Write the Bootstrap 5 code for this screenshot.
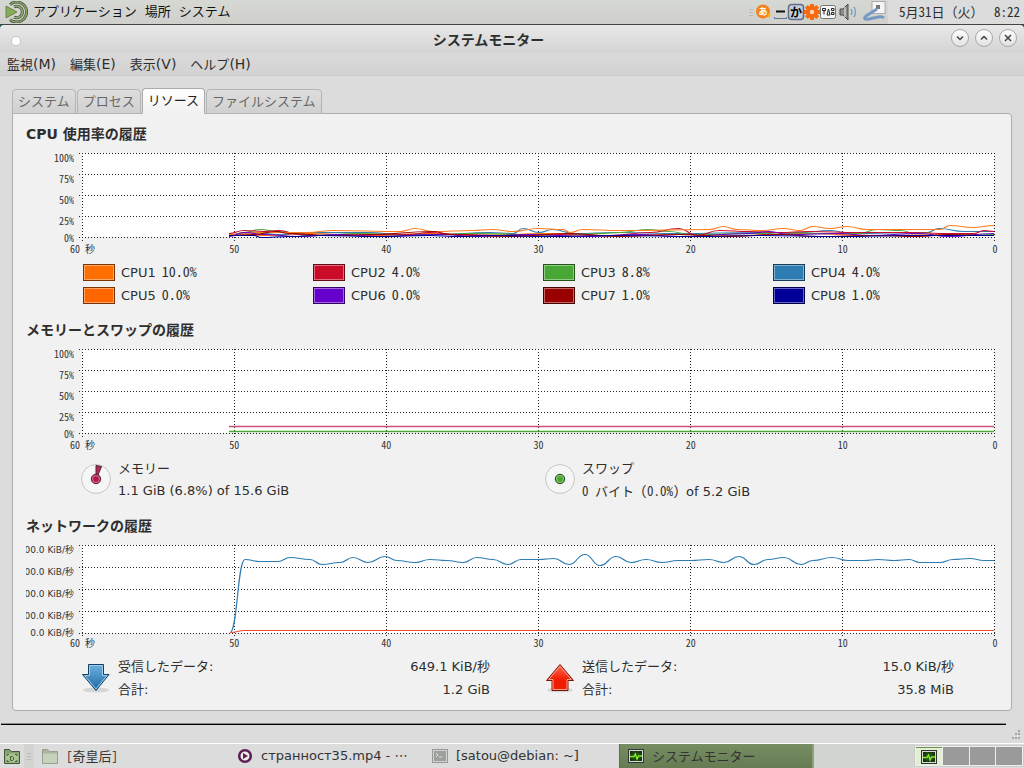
<!DOCTYPE html>
<html lang="ja">
<head>
<meta charset="utf-8">
<meta name="viewport" content="width=device-width, initial-scale=1">
<title>システムモニター</title>
<link rel="stylesheet" href="https://cdn.jsdelivr.net/npm/bootstrap@5.3.0/dist/css/bootstrap.min.css">
<style>
body{font:13px/20px "DejaVu Sans","Noto Sans CJK JP",sans-serif;color:#2e2e2e;background:#dcdcdc}
button{font:inherit;color:inherit;background:none;border:0;padding:0}
.cjk{font-family:"Noto Sans CJK JP",sans-serif;font-feature-settings:"hwid"}
.fullw{font-feature-settings:normal}
.fs14{font-size:14px}
.toppanel{height:25px;background:linear-gradient(#d6d8d4,#cfd0cc);border-bottom:1px solid #444;padding-left:5px;color:#111}
.toppanel nav{gap:8px;margin-left:5px}
.toppanel nav button{line-height:18px;padding-bottom:2px}
.clock{background:#dcdcdc;height:24px;padding:0 4px 0 11px;line-height:23px;color:#2e2e2e}
.titlebar{height:28px;background:linear-gradient(#e8e8e8,#d4d4d4);padding:0 7px 0 12px;border-radius:4px 4px 0 0}
.titlewrap{background:#12565f}
.titlebar h1{font-size:14px;line-height:28px;font-weight:700;padding-left:6px;margin:0}
.dot{width:8px;height:8px;border-radius:50%;background:#fff;box-shadow:0 0 0 1px #c8c8c8;margin-top:4px}
.wbtns{gap:6px;margin-top:-2px}
.wbtn{width:18px;height:18px;border-radius:50%;border:1px solid #a6a6a6;background:linear-gradient(#fff,#e2e2e2);display:flex;align-items:center;justify-content:center}
.menus{height:23px;background:linear-gradient(#dadada,#d2d2d2);border-bottom:1px solid #cacaca;padding-left:7px;gap:14px}
.menus button{line-height:22px}
.body-area{padding:12px 12px 0}
.nav-tabs{border:0;gap:1px;align-items:flex-end;position:relative;z-index:1;margin-bottom:-1px}
.nav-tabs .nav-link{border:1px solid #b4b4b4;border-radius:4px 4px 0 0;padding:0 5px 2px;height:25px;line-height:20px;color:#666;background:linear-gradient(#dedede,#d0d0d0);margin:0}
.nav-tabs .nav-link.active{height:26px;color:#222;background:linear-gradient(#fff,#f1f1f1);border-color:#aaa;border-bottom-color:#f1f1f1}
.pane{background:#f1f1f1;border:1px solid #adadad;border-radius:0 4px 4px 4px;height:598px;padding:10px 4px 0 13px}
.sect{height:196px}
.sect h2{font-size:14px;line-height:20px;font-weight:700;margin:0}
.chart-row{padding:9px 12px 0 0;height:98px}
.ylab{width:48px;margin-right:5px;margin-top:-6px;font-size:10px;color:#333}
.ylab span{display:flex;justify-content:flex-end;white-space:nowrap;overflow:hidden;height:21px;line-height:21px}
.ylab span:last-child{height:13px;line-height:13px}
.ylab.net{font-size:9px}
.ylab.net span{height:22px;line-height:22px}
.ylab.net span:last-child{height:13px;line-height:13px}
.plot{min-width:0}
.plot svg{display:block;width:100%;height:94px}
.xlab{padding-left:44px;font-size:10px;line-height:14px;height:14px;color:#333}
.xlab span{width:24px;text-align:center;white-space:nowrap}
.xlab.net{margin-top:2px;margin-bottom:1px}
.legend{display:grid;grid-template-columns:repeat(4,1fr);padding:6px 4px 0 57px;row-gap:3px}
.legend>div{height:20px}
.legend .lbl{margin-left:6px;line-height:22px;height:20px}
.legend .cjk{line-height:18px}
.swatch{width:32px;height:17px;border:1px solid #333;box-shadow:inset 0 0 0 1px rgba(255,255,255,.4)}
.pair{display:grid;grid-template-columns:1fr 1fr;column-gap:55px;padding:4px 53px 0 55px}
.pair .ico{width:30px;height:30px;margin-right:7px;margin-top:8px;flex:none}
.pair .ln{line-height:23px}
.statusrow{height:33px;border-bottom:1px solid #fff;padding:12px 18px 0 1px}
.statusrow hr{margin:0;border-top:1px solid #8c8c8c;border-bottom:1px solid #000;height:2px;opacity:1}
.grip{position:absolute;right:3px;bottom:3px}
.taskbar{height:24px;background:#dcdcdc}
.handle{width:10px;height:24px;background:#d3d4d1}
.task{width:195px;height:24px;text-align:left;display:flex;align-items:center;padding-left:8px;gap:8px;white-space:nowrap;color:#333}
.task.on{background:linear-gradient(#778d62,#667b52);border-right:2px solid #8ba477;border-left:1px solid #5d714a;color:#333}
.spacer{background:#d2d4d0;height:24px}
.ws{width:110px;height:22px;background:#eee;padding:1px;gap:1px;border:1px solid #ccc}
.ws button{flex:1;background:#9a9a9a;display:flex;align-items:center;justify-content:center}
.ws button.on{background:#e2f0d2;border-top:1px solid #6d9150}
</style>
</head>
<body>
<svg width="0" height="0" class="position-absolute">
<defs>
<symbol id="mon" viewBox="0 0 16 14"><rect x=".5" y=".5" width="15" height="13" fill="#d8dad6" stroke="#333"/><rect x="2" y="2" width="12" height="10" fill="#17330c"/><path d="M3 5h10M3 9h10M6 2v10M10 2v10" stroke="#2f5f17"/><path d="M2 7.500h4l1.500-2.500 1.500 5 1.500-3h3.500" fill="none" stroke="#82ee2c" stroke-width="1.400"/></symbol>
<linearGradient id="gb" x2="0" y2="1"><stop stop-color="#6fb0dc"/><stop offset="1" stop-color="#1c6aa6"/></linearGradient>
<linearGradient id="gr" x2="0" y2="1"><stop stop-color="#ff6a55"/><stop offset=".6" stop-color="#f01c00"/></linearGradient>
</defs>
</svg>
<div class="d-flex flex-column min-vh-100">
<header class="toppanel d-flex align-items-center">
<svg width="23" height="22" viewBox="0 0 23 22"><g fill="none"><path d="M5 3.500A10 10 0 1 1 5 18.500" stroke="#4b5346" stroke-width="3"/><path d="M5 3.500A10 10 0 1 1 5 18.500" stroke="#86a860" stroke-width="1.500"/><path d="M9 5.800A5.800 5.800 0 1 1 9 16.200" stroke="#4b5346" stroke-width="3"/><path d="M9 5.800A5.800 5.800 0 1 1 9 16.200" stroke="#93b56c" stroke-width="1.300"/></g><path d="M1 5l11 6L1 17z" fill="#86ad55" stroke="#5a7440" stroke-width=".8"/></svg>
<nav class="d-flex cjk"><button>アプリケーション</button><button>場所</button><button>システム</button></nav>
<svg class="ms-auto" width="140" height="24" viewBox="0 0 140 24">
<g stroke="#b9bbb7"><path d="M1 9.500h4M1 12.500h4M1 15.500h4"/></g>
<circle cx="15" cy="11.500" r="7" fill="#f5821c"/><path d="M19 15a3 3 0 0 1 4 0l-2 3z" fill="#fbb31c"/><text x="15" y="15" font-size="9" font-weight="700" text-anchor="middle" fill="#fff">あ</text>
<path d="M28 11.500h9" stroke="#111" stroke-width="2"/><path d="M26.500 17v1.500h12V17" fill="none" stroke="#5b7394"/>
<rect x="40.500" y="4.500" width="15" height="15" rx="3" fill="#c4cddb" stroke="#5d6e87" stroke-width="1.500"/><text x="48" y="16.500" font-size="12" font-weight="700" text-anchor="middle" fill="#000">か</text>
<g transform="translate(64 12)" fill="#f86a0c"><circle r="6"/><path d="M-2-8h4v16h-4zM-8-2h16v4h-16z"/><path d="M-2-8h4v16h-4zM-8-2h16v4h-16z" transform="rotate(45)"/></g><circle cx="64" cy="12" r="2.200" fill="#f5d9c4"/>
<rect x="72.500" y="5.500" width="15" height="13" rx="2" fill="#f5f5f5" stroke="#777"/><path d="M74.500 8.500h3v2h-3zM76 10.500v4M79 15l1.500-6 1.500 6zM83.500 8.500h2.500v2h-2.500zM83.500 12.500h2.500v2h-2.500z" fill="none" stroke="#222"/>
<path d="M92 9h3l5-5v16l-5-5h-3z" fill="#8b8e88" stroke="#4a4d48"/><path d="M97 7v10" stroke="#eee"/><path d="M103 9q2 3 0 6M106 7q3 5 0 10" fill="none" stroke="#6f9cc8" stroke-width="1.300"/>
<rect x="124" y="1.500" width="13" height="12" fill="#f6f6f6" stroke="#aaa"/><rect x="128" y="5" width="4" height="4" fill="#777"/><path d="M129 9l-11 7q-4 4 3 3l9-2q4-1 6 1" fill="none" stroke="#7899c4" stroke-width="3"/>
</svg>
<span class="clock cjk">5月31日<span class="fullw">（火）</span><span class="ms-1"> 8:22</span></span>
</header>

<div class="titlewrap"><div class="titlebar d-flex align-items-center">
<span class="dot"></span>
<h1 class="flex-fill text-center cjk">システムモニター</h1>
<div class="d-flex wbtns">
<button class="wbtn" aria-label="最小化"><svg width="8" height="8" viewBox="0 0 8 8"><path d="M1 2.500l3 3 3-3" fill="none" stroke="#444" stroke-width="1.500"/></svg></button>
<button class="wbtn" aria-label="最大化"><svg width="8" height="8" viewBox="0 0 8 8"><path d="M1 5.500l3-3 3 3" fill="none" stroke="#444" stroke-width="1.500"/></svg></button>
<button class="wbtn" aria-label="閉じる"><svg width="8" height="8" viewBox="0 0 8 8"><path d="M1 1l6 6M7 1L1 7" stroke="#444" stroke-width="1.500"/></svg></button>
</div></div></div>
<nav class="menus d-flex"><button>監視<span class="fs14">(M)</span></button><button>編集<span class="fs14">(E)</span></button><button>表示<span class="fs14">(V)</span></button><button>ヘルプ<span class="fs14">(H)</span></button></nav>

<main class="body-area">
<ul class="nav nav-tabs" role="tablist">
<li><button class="nav-link cjk" role="tab">システム</button></li><li><button class="nav-link cjk" role="tab">プロセス</button></li><li><button class="nav-link active cjk" role="tab" aria-selected="true">リソース</button></li><li><button class="nav-link cjk" role="tab">ファイルシステム</button></li>
</ul>
<div class="pane">
<section class="sect">
<h2>CPU 使用率の履歴</h2>
<div class="chart-row d-flex"><div class="ylab cjk"><span>100%</span><span>75%</span><span>50%</span><span>25%</span><span>0%</span></div><div class="plot flex-fill" data-chart="cpu" data-step="21"></div></div>
<div class="xlab cjk d-flex justify-content-between"><span>60 秒</span><span>50</span><span>40</span><span>30</span><span>20</span><span>10</span><span>0</span></div>
<div class="legend" id="legend"></div>
</section>
<section class="sect">
<h2>メモリーとスワップの履歴</h2>
<div class="chart-row d-flex"><div class="ylab cjk"><span>100%</span><span>75%</span><span>50%</span><span>25%</span><span>0%</span></div><div class="plot flex-fill" data-chart="mem" data-step="21"></div></div>
<div class="xlab cjk d-flex justify-content-between"><span>60 秒</span><span>50</span><span>40</span><span>30</span><span>20</span><span>10</span><span>0</span></div>
<div class="pair">
<div class="d-flex"><svg class="ico" viewBox="0 0 30 30"><circle cx="15" cy="15" r="14.500" fill="#f6f6f6" stroke="#c6c6c6"/><path d="M15 15V1.500l5.500 1L17 11z" fill="#b8285a" stroke="#4a2030"/><circle cx="15" cy="15" r="4.700" fill="#b5174f" stroke="#4a2030"/><circle cx="15" cy="15" r="3.500" fill="none" stroke="#d87c9d"/></svg><div class="ln"><div class="cjk">メモリー</div><div>1.1 GiB (6.8%) of 15.6 GiB</div></div></div>
<div class="d-flex"><svg class="ico" viewBox="0 0 30 30"><circle cx="15" cy="15" r="14.500" fill="#f6f6f6" stroke="#c6c6c6"/><circle cx="15" cy="15" r="4.700" fill="#49a835" stroke="#24421e"/><circle cx="15" cy="15" r="3.500" fill="none" stroke="#8fce80"/></svg><div class="ln"><div class="cjk">スワップ</div><div><span class="cjk">0 バイト (0.0%) </span>of 5.2 GiB</div></div></div>
</div>
</section>
<section class="sect">
<h2>ネットワークの履歴</h2>
<div class="chart-row d-flex"><div class="ylab net"><span>800.0 KiB/秒</span><span>600.0 KiB/秒</span><span>400.0 KiB/秒</span><span>200.0 KiB/秒</span><span>0.0 KiB/秒</span></div><div class="plot flex-fill" data-chart="net" data-step="22"></div></div>
<div class="xlab net cjk d-flex justify-content-between"><span>60 秒</span><span>50</span><span>40</span><span>30</span><span>20</span><span>10</span><span>0</span></div>
<div class="pair">
<div class="d-flex"><svg class="ico" viewBox="0 0 30 30"><ellipse cx="15" cy="27" rx="13" ry="2.500" fill="#d6d6d6"/><path d="M7.500 1.500h15v10h5.500L15 27.500 1.500 11.500h6z" fill="url(#gb)" stroke="#123f63"/><path d="M8.500 2.500h13v10h4.500L15 26 3.500 12.500h5z" fill="none" stroke="#9fcdec"/></svg><div class="ln flex-fill"><div class="d-flex justify-content-between"><span>受信したデータ:</span><span>649.1 KiB/秒</span></div><div class="d-flex justify-content-between"><span>合計:</span><span>1.2 GiB</span></div></div></div>
<div class="d-flex"><svg class="ico" viewBox="0 0 30 30"><ellipse cx="15" cy="27" rx="13" ry="2.500" fill="#d6d6d6"/><path d="M15 1.500L28.500 17.500h-5.500v10H7v-10H1.500z" fill="url(#gr)" stroke="#7c1205"/><path d="M15 3.200L26.300 16.500H22v10H8v-10H3.700z" fill="none" stroke="#ffa294"/></svg><div class="ln flex-fill"><div class="d-flex justify-content-between"><span>送信したデータ:</span><span>15.0 KiB/秒</span></div><div class="d-flex justify-content-between"><span>合計:</span><span>35.8 MiB</span></div></div></div>
</div>
</section>
</div>
</main>
<div class="statusrow position-relative"><hr><svg class="grip" width="10" height="10" fill="#a3a69c"><path d="M7 0h2v2h-2zM4 3h2v2h-2zM7 3h2v2h-2zM1 7h2v2h-2zM4 7h2v2h-2zM7 7h2v2h-2z"/></svg></div>

<footer class="taskbar d-flex align-items-center mt-auto">
<button aria-label="デスクトップ" class="d-flex ms-1 me-1"><svg width="16" height="15" viewBox="0 0 16 15"><path d="M.5 14.500V.5h5l2 2h8v12z" fill="#84a06c" stroke="#42583a"/><rect x="1.500" y="4.500" width="13" height="9" fill="#a9c492"/><path d="M3 7V5.500h2M13 7V5.500h-2M3 11v1.500h2M13 11v1.500h-2M6.500 7.500h2l1 1v2l-1 1h-2z" fill="none" stroke="#42583a"/></svg></button>
<span class="handle"><svg width="10" height="24"><path d="M3 9.500h4M3 12.500h4M3 15.500h4" stroke="#bbb"/></svg></span>
<button class="task"><svg width="16" height="15" viewBox="0 0 16 15"><path d="M.5 14.500V.5h5l2 2h8v12z" fill="#a9b5a0" stroke="#96a08e"/><rect x="1" y="4.500" width="14" height="9.500" fill="#c6d3ba"/></svg><span class="cjk">[奇皇后]</span></button>
<button class="task"><svg width="16" height="16" viewBox="0 0 16 16"><circle cx="8" cy="8" r="5.800" fill="#eee" stroke="#5c2054" stroke-width="2.600"/><path d="M6 5l5 3-5 3z" fill="#5c2054"/></svg><span>странност35.mp4 - ⋯</span></button>
<button class="task"><svg width="16" height="14" viewBox="0 0 16 14"><rect x=".5" y=".5" width="15" height="13" fill="#d2d2d2" stroke="#999"/><rect x="2" y="2" width="12" height="10" fill="#9c9f9c"/><path d="M4 4l2 2-2 2M7 8h3" fill="none" stroke="#e3e3e3"/></svg><span>[satou@debian: ~]</span></button>
<button class="task on"><svg width="16" height="14"><use href="#mon"/></svg><span class="cjk">システムモニター</span></button>
<div class="spacer flex-fill"></div>
<div class="ws d-flex"><button class="on" aria-label="1"><svg width="16" height="14"><use href="#mon"/></svg></button><button aria-label="2"></button><button aria-label="3"></button><button aria-label="4"></button></div>
</footer>
</div>
<script>
// CPU legend entries: value, fill, border
const cpus=[['10.0%','#ff6e00','#7d3500'],['4.0%','#cb0c29','#640a18'],['8.8%','#49a835','#24541a'],['4.0%','#2d7db3','#163e59'],['0.0%','#ff6600','#7d3200'],['0.0%','#6600cc','#320066'],['1.0%','#990000','#4a0000'],['1.0%','#000099','#00004a']];
document.getElementById('legend').innerHTML=cpus.map((c,i)=>`<div class="d-flex align-items-center"><span class="swatch" style="background:${c[1]};border-color:${c[2]}"></span><span class="lbl">CPU${i+1}</span><span class="lbl cjk fs14">${c[0]}</span></div>`).join('');
// Series: colour followed by x,y pairs of the sample points
const data={
cpu:[
['#ff6600',150,81,190,82,230,80,290,82,350,80,400,82,470,80,530,82,600,81,660,82,720,80,800,82,870,81,915,82],
['#2d7db3',150,81,175,79,200,81,230,79,290,79,320,81,360,81,410,79,434,80,444,75,460,79,474,76,495,80,540,79,600,80,680,79,700,81,720,79,752,77,770,80,848,79,860,75,885,78,915,78],
['#49a835',150,82,165,79,181,76,200,78,230,82,280,80,330,82,400,80,480,82,520,80,541,79,568,76,590,78,612,81,680,80,700,79,750,80,780,80,798,76,822,77,835,80,850,79,854,82,915,81],
['#cb0c29',150,80,165,77,185,78,200,77,220,81,250,82,330,81,350,79,380,81,430,82,480,81,530,82,571,79,600,75,618,82,640,77,670,78,700,79,730,78,780,79,830,79,870,80,895,80,905,77,915,78],
['#ff7a1a',150,81,180,79,228,79,254,77,321,78,336,75,354,78,394,77,413,76,434,78,459,75,484,76,491,79,504,76,541,77,631,76,644,73,658,76,684,77,704,75,721,77,734,73,751,75,768,73,788,76,861,76,871,72,894,74,915,72],
['#6600cc',150,83,165,79,185,81,220,83,260,81,300,83,360,81,400,83,450,81,510,83,560,81,600,83,670,80,690,78,710,81,760,80,790,82,840,80,870,83,915,80],
['#990000',150,82,175,81,197,78,210,80,250,82,290,81,355,78,370,81,430,83,490,80,540,83,600,81,650,83,700,81,740,83,790,82,840,83,870,81,915,82],
['#000099',150,82,175,82,182,84,210,83,240,82,300,83,350,82,380,83,410,82,470,83,540,82,620,83,680,82,760,83,830,82,915,82]],
mem:[['#cf4f7c',150,77,915,77],['#49a835',150,82,915,82]],
net:[['#2d7db3',151,87,166,14,181,16,199,16,211,12,231,14,243,19,261,17,274,12,289,17,306,11,318,15,336,17,351,14,368,15,384,17,398,12,414,14,429,19,442,14,460,14,475,13,490,19,506,9,521,20,537,11,552,17,567,14,583,17,599,15,612,15,630,14,645,17,660,11,675,19,689,14,705,12,722,19,734,15,753,12,769,15,785,15,799,14,815,15,830,14,841,17,861,17,874,14,891,13,905,15,915,15],
['#f24a30',151,87,166,85,915,85]]};
document.querySelectorAll('[data-chart]').forEach(el=>{
 const s=+el.dataset.step,h=s*4;let g='';
 for(let i=0;i<5;i++)g+=`<path d="M0 ${i*s+.5}H916"/>`;
 for(let i=0;i<7;i++)g+=`<path d="M${i*152+3.5} 0V${h+4}"/>`;
 const w=el.dataset.chart==='mem'?1.5:1.2;
 const lines=data[el.dataset.chart].map(([c,...p])=>{
  let d=`M${p[0]} ${p[1]}`;
  for(let i=2;i<p.length;i+=2){const m=(p[i-2]+p[i])/2;d+=`C${m} ${p[i-1]} ${m} ${p[i+1]} ${p[i]} ${p[i+1]}`}
  return `<path d="${d}" stroke="${c}"/>`}).join('');
 el.innerHTML=`<svg viewBox="0 0 916 94" preserveAspectRatio="none"><rect x="3" width="912" height="${h}" fill="#fff"/><g stroke="#222" stroke-dasharray="1 2">${g}</g><g fill="none" stroke-width="${w}" transform="translate(0 .5)">${lines}</g></svg>`;
});
</script>
<script src="https://cdn.jsdelivr.net/npm/bootstrap@5.3.0/dist/js/bootstrap.bundle.min.js"></script>
</body>
</html>
